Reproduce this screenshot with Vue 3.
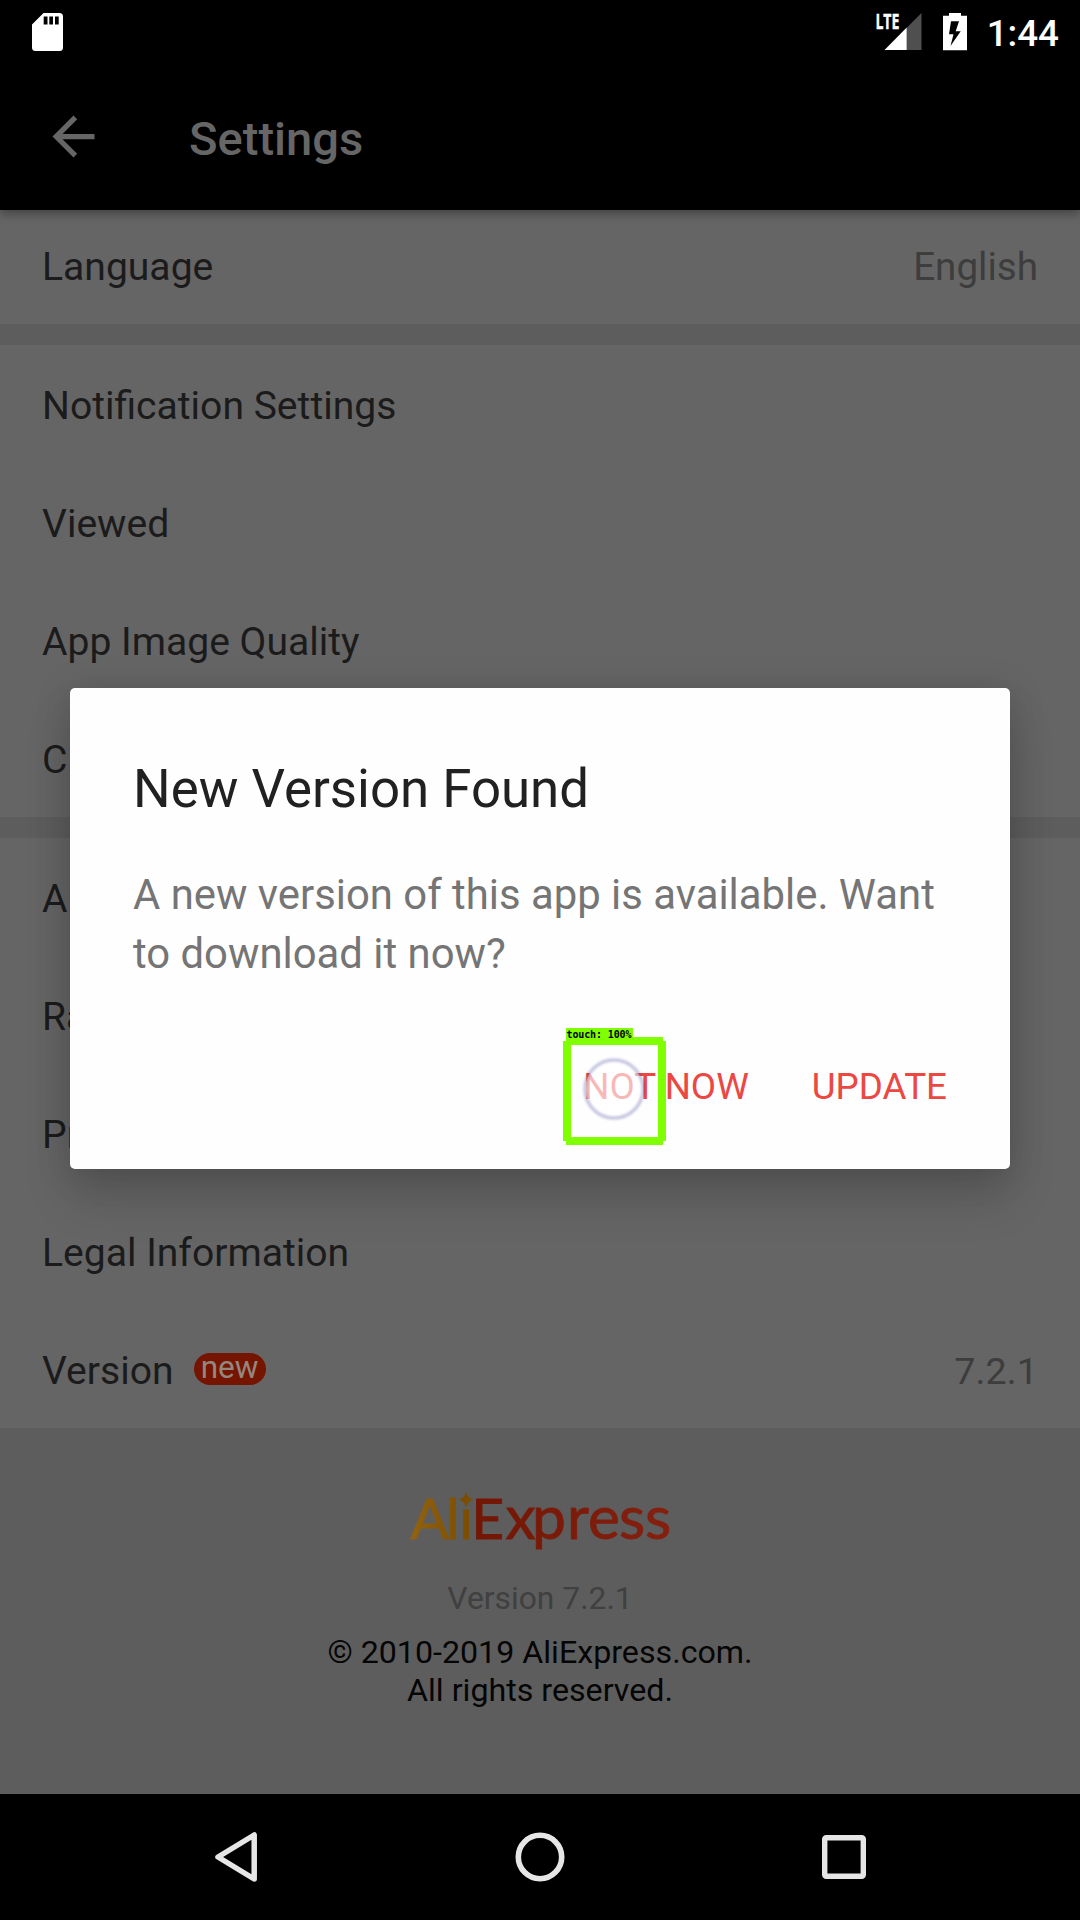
<script setup>
const general = ['Notification Settings', 'Viewed', 'App Image Quality', 'C']
const about = ['Ap', 'Ra', 'Pr', 'Legal Information']
</script>

<template>
  <div class="screen">
    <header class="top">
      <div class="status">
        <svg class="sd" width="31" height="38" viewBox="0 0 31 38">
          <path fill="#fff" fill-rule="evenodd" d="M11.5 0H27.5Q31 0 31 3.5V34.5Q31 38 27.5 38H3.500Q0 38 0 34.500V11.500ZM11.700 3.500V11.500H15.500V3.500ZM17.300 3.500V11.500H21V3.500ZM23 3.500V11.500H26.700V3.500Z" />
        </svg>
        <div class="status-right">
          <svg class="signal" width="46" height="38" viewBox="0 0 46 38">
            <path fill="#4f4f4f" d="M45.500 0V37H30.500V15Z" />
            <path fill="#fff" d="M30.700 14.500V37H8.500Z" />
            <text x="-.6" y="16.300" class="lte" textLength="24" lengthAdjust="spacingAndGlyphs">LTE</text>
          </svg>
          <svg class="battery" width="24" height="38" viewBox="0 0 24 38">
            <path fill="#fff" fill-rule="evenodd" d="M6 0H18V2.800H24V37.300H0V2.800H6ZM8 8.300L6 21.300H10.500L7.500 33L17.700 18.300H12.700L16 8.300Z" />
          </svg>
          <span class="clock">1:44</span>
        </div>
      </div>
      <div class="appbar">
        <svg width="63" height="63" viewBox="0 0 24 24">
          <path fill="#666" d="M20 11H7.830l5.590-5.590L12 4l-8 8 8 8 1.410-1.410L7.830 13H20z" />
        </svg>
        <h1>Settings</h1>
      </div>
    </header>

    <main>
      <section class="group first">
        <div class="row"><span>Language</span><span class="value">English</span></div>
      </section>
      <section class="group">
        <div v-for="item in general" :key="item" class="row"><span>{{ item }}</span></div>
      </section>
      <section class="group last">
        <div v-for="item in about" :key="item" class="row"><span>{{ item }}</span></div>
        <div class="row">
          <span>Version</span><span class="badge">new</span><span class="value version">7.2.1</span>
        </div>
      </section>
      <footer>
        <svg class="logo" width="280" height="80" viewBox="400 1480 280 80">
          <defs>
            <linearGradient id="orange" gradientUnits="userSpaceOnUse" x1="410" y1="0" x2="470" y2="0">
              <stop offset="0" stop-color="#936212" /><stop offset="1" stop-color="#7a4d00" />
            </linearGradient>
            <linearGradient id="red" gradientUnits="userSpaceOnUse" x1="476" y1="0" x2="670" y2="0">
              <stop offset="0" stop-color="#731605" /><stop offset="1" stop-color="#85200f" />
            </linearGradient>
          </defs>
          <text y="1539" class="word" fill="url(#orange)" stroke="url(#orange)" x="410.500 446 459.300">Ali</text>
          <circle cx="466" cy="1499" r="6.500" fill="#5d5d5d" />
          <path fill="#7a4d00" d="M466 1492Q467.500 1498 473.500 1499.500Q467.500 1501 466 1507Q464.500 1501 458.500 1499.500Q464.500 1498 466 1492Z" />
          <text y="1539" class="word" fill="url(#red)" stroke="url(#red)" x="471.300">E<tspan class="lower" x="505.500 532 567 588 619 645">xpress</tspan></text>
        </svg>
        <p class="ver">Version 7.2.1</p>
        <p class="copy">© 2010-2019 AliExpress.com.<br>All rights reserved.</p>
      </footer>
    </main>

    <nav>
      <svg width="46" height="52" viewBox="0 0 46 52"><path d="M41.200 4V48L5 26Z" fill="none" stroke="#e6e6e6" stroke-width="5.500" stroke-linejoin="round" /></svg>
      <svg width="52" height="52" viewBox="0 0 52 52"><circle cx="26" cy="26" r="21.700" fill="none" stroke="#e6e6e6" stroke-width="5.600" /></svg>
      <svg width="46" height="46" viewBox="0 0 46 46"><rect x="3.700" y="3.700" width="38.600" height="38.600" rx="1.500" fill="none" stroke="#e6e6e6" stroke-width="5.400" /></svg>
    </nav>

    <div class="dialog">
      <h2>New Version Found</h2>
      <p>A new version of this app is available. Want to download it now?</p>
      <div class="actions"><button>NOT NOW</button><button>UPDATE</button></div>
    </div>

    <svg class="touch" width="110" height="125" viewBox="560 1025 110 125">
      <circle cx="614" cy="1089" r="29" fill="#fff" fill-opacity=".62" />
      <circle class="halo" cx="614" cy="1089" r="29" />
      <path fill="#80ff00" fill-rule="evenodd" d="M566 1037H663V1041H666V1141H663V1145H566V1141H563V1041H566ZM571 1045V1137H658V1045Z" />
      <rect x="566" y="1028" width="67" height="14" fill="#80ff00" />
      <text x="566.500" y="1038" class="tag" textLength="65">touch: 100%</text>
    </svg>
  </div>
</template>

<style>
body { margin: 0; background: #000; }
</style>

<style scoped>
.screen { position: relative; width: 1080px; height: 1920px; overflow: hidden; display: flex; flex-direction: column; background: #5d5d5d; font-family: Roboto, sans-serif; }
.top { height: 210px; background: #000; position: relative; z-index: 1; box-shadow: 0 3px 10px rgba(0, 0, 0, .38); flex: none; }
.status { height: 63px; display: flex; justify-content: space-between; box-sizing: border-box; padding: 12.500px 21px 0 32px; }
.status-right { display: flex; align-items: flex-start; }
.signal { overflow: visible; }
.battery { margin: 0 20px 0 20.500px; }
.lte { font: 700 21px "Open Sans", sans-serif; fill: #fff; stroke: #fff; stroke-width: .4px; }
.clock { color: #fff; font-size: 36.750px; font-weight: 500; line-height: 42px; }
.appbar { height: 147px; display: flex; align-items: center; padding-left: 42px; }
h1 { margin: 5px 0 0 84px; font-size: 47.100px; font-weight: 500; line-height: 56px; color: #666; }
main { flex: 1; display: flex; flex-direction: column; }
.group { background: #656565; margin-bottom: 21px; }
.group.first { height: 114px; display: flex; flex-direction: column; justify-content: flex-end; }
.group.last { margin-bottom: 0; }
.row { height: 118px; box-sizing: border-box; padding: 4px 42px 0; display: flex; align-items: center; font-size: 39.100px; line-height: 46px; color: #1b1b1c; flex: none; }
.value { margin-left: auto; color: #3d3d3d; font-size: 38.600px; }
.value.version { font-size: 37.800px; margin-top: -1px; }
.badge { margin: -5px 0 0 20px; width: 72px; height: 32px; border-radius: 16px; background: #751500; color: #94877f; font-size: 31.500px; line-height: 30px; text-align: center; }
footer { flex: 1; display: flex; flex-direction: column; align-items: center; text-align: center; padding-top: 52px; }
.logo { display: block; overflow: visible; }
.word { font: 400 57px Lato, sans-serif; stroke-width: .9px; }
.lower { font-size: 60.500px; }
.ver { margin: 19px 0 0; font-size: 31.800px; line-height: 38px; color: #404040; }
.copy { margin: 16px 0 0; font-size: 32.200px; line-height: 38px; color: #050505; }
nav { height: 126px; background: #000; display: flex; align-items: center; justify-content: space-between; box-sizing: border-box; padding: 0 213px; flex: none; }
.dialog { position: absolute; z-index: 2; left: 70px; top: 688px; width: 940px; height: 481px; box-sizing: border-box; padding: 63px 60px 0 63px; border-radius: 5px; background: #fefefe; box-shadow: 0 30px 48px rgba(0, 0, 0, .14), 0 3px 36px rgba(0, 0, 0, .15); display: flex; flex-direction: column; }
h2 { margin: 7px 0 0; font-size: 52.800px; font-weight: 400; line-height: 62px; color: #212121; }
.dialog p { margin: 45px 0 0; font-size: 41.850px; line-height: 59px; color: #757575; }
.actions { display: flex; justify-content: flex-end; gap: 63px; margin: 82px 3px 0 0; }
button { border: 0; padding: 0; background: none; font: 400 36.750px/44px Roboto, sans-serif; color: #eb4743; }
.touch { position: absolute; z-index: 3; left: 560px; top: 1025px; }
.halo { fill: none; stroke: #3a3a9a; stroke-opacity: .28; stroke-width: 3.500px; filter: blur(1px); }
.tag { font: 700 10px "DejaVu Sans Mono", monospace; fill: #000; }
</style>
